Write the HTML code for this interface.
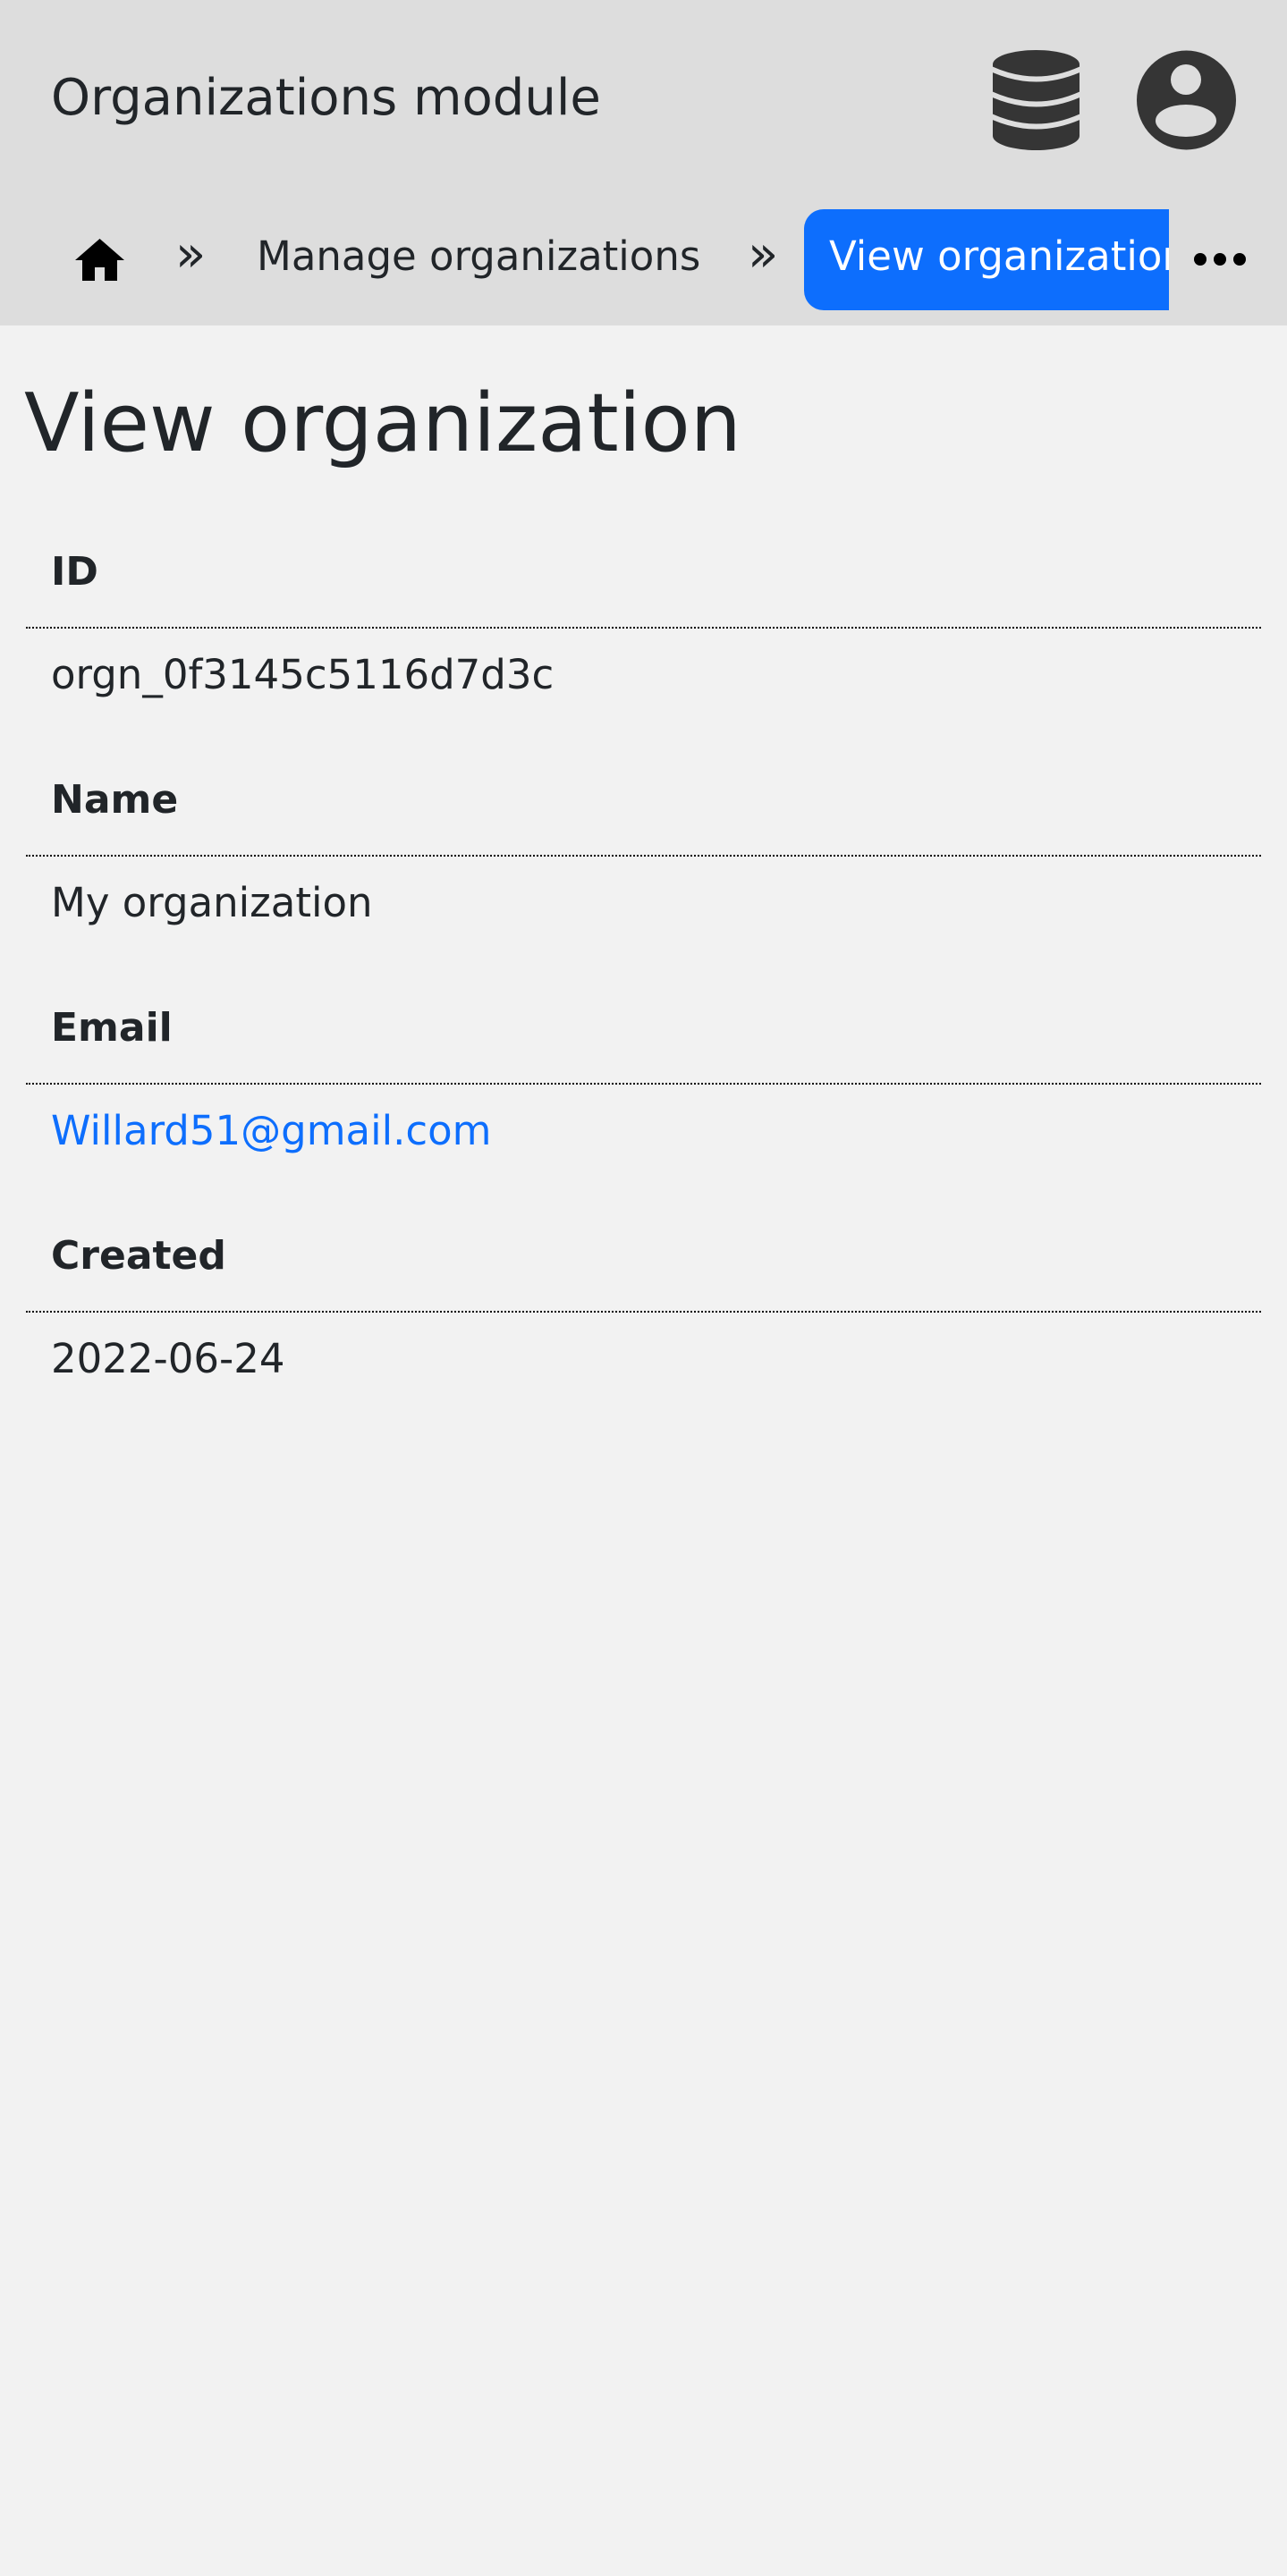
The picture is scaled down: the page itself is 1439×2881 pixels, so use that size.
<!DOCTYPE html>
<html><head><meta charset="utf-8"><style>
html,body{margin:0;padding:0;}
body{width:1439px;height:2881px;background:#f2f2f2;position:relative;overflow:hidden;font-family:"DejaVu Sans","Liberation Sans",sans-serif;color:#212529;}
.a{position:absolute;white-space:nowrap;}
.hdr{position:absolute;left:0;top:0;width:1439px;height:364px;background:#dddddd;}
.t{font-size:56px;line-height:56px;}
.b{font-size:45px;line-height:45px;}
.h1{font-size:90px;line-height:90px;}
.lab{font-size:44px;line-height:44px;font-weight:bold;}
.line{position:absolute;left:29px;width:1381px;height:0;border-top:2px dotted #000;}
.rq{font-size:56px;line-height:56px;}
</style></head><body>
<div class="hdr"></div>
<div class="a t" style="left:57px;top:82px;">Organizations module</div>
<svg class="a" style="left:1110px;top:56px" width="97" height="112" viewBox="0 0 97 112">
<ellipse cx="48.5" cy="16" rx="48.5" ry="16" fill="#353535"/>
<rect x="0" y="16" width="97" height="80" fill="#353535"/>
<ellipse cx="48.5" cy="96" rx="48.5" ry="16" fill="#353535"/>
<path d="M-2 21 Q48.5 44 99 21" stroke="#dddddd" stroke-width="6" fill="none"/>
<path d="M-2 49 Q48.5 72 99 49" stroke="#dddddd" stroke-width="6" fill="none"/>
<path d="M-2 74 Q48.5 97 99 74" stroke="#dddddd" stroke-width="6" fill="none"/>
</svg>
<svg class="a" style="left:1271px;top:56px" width="111" height="112" viewBox="0 0 111 112">
<circle cx="55.5" cy="56" r="55.5" fill="#353535"/>
<circle cx="55" cy="33" r="17" fill="#dddddd"/>
<ellipse cx="55" cy="79" rx="34" ry="18" fill="#dddddd"/>
</svg>
<svg class="a" style="left:84px;top:267px" width="55" height="47" viewBox="0 0 55 47">
<path d="M27.5 0 L55 24 L47 24 L47 47 L33 47 L33 32 L22 32 L22 47 L8 47 L8 24 L0 24 Z" fill="#000"/>
</svg>
<div class="a rq" style="left:196px;top:257px;">»</div>
<div class="a b" style="left:287px;top:264px;">Manage organizations</div>
<div class="a rq" style="left:836px;top:257px;">»</div>
<div class="a" style="left:899px;top:234px;width:408px;height:113px;background:#0d6efd;border-radius:22px 0 0 22px;overflow:hidden;">
<div class="a b" style="left:28px;top:30px;color:#fff;">View organization</div>
</div>
<svg class="a" style="left:1334px;top:282px" width="60" height="16" viewBox="0 0 60 16">
<circle cx="8" cy="8" r="7" fill="#000"/><circle cx="30" cy="8" r="7" fill="#000"/><circle cx="52" cy="8" r="7" fill="#000"/>
</svg>
<div class="a h1" style="left:27px;top:429px;">View organization</div>

<div class="a lab" style="left:57px;top:618px;">ID</div>
<div class="line" style="top:701px;"></div>
<div class="a b" style="left:57px;top:732px;">orgn_0f3145c5116d7d3c</div>

<div class="a lab" style="left:57px;top:873px;">Name</div>
<div class="line" style="top:956px;"></div>
<div class="a b" style="left:57px;top:987px;">My organization</div>

<div class="a lab" style="left:57px;top:1128px;">Email</div>
<div class="line" style="top:1211px;"></div>
<div class="a b" style="left:57px;top:1242px;color:#0d6efd;">Willard51@gmail.com</div>

<div class="a lab" style="left:57px;top:1383px;">Created</div>
<div class="line" style="top:1466px;"></div>
<div class="a b" style="left:57px;top:1497px;">2022-06-24</div>
</body></html>
